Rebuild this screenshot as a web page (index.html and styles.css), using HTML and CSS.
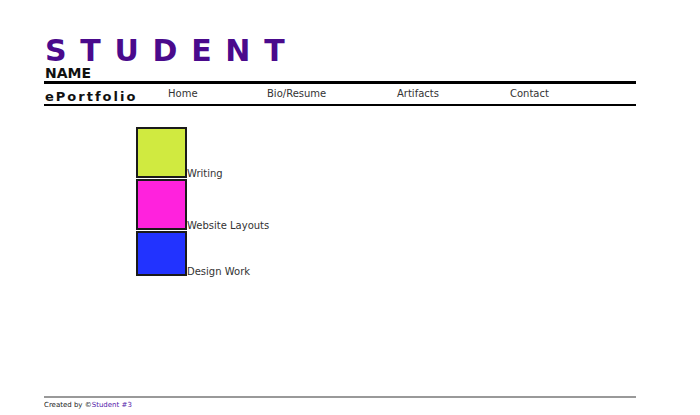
FILE: index.html
```html
<!DOCTYPE html>
<html>
<head>
<meta charset="utf-8">
<link rel="stylesheet" href="styles.css">
</head>
<body>
<div class="page">
  <header class="header">
    <div class="title">STUDENT</div>
    <div class="subtitle">NAME</div>
    <nav class="navbar">
      <span class="brand">ePortfolio</span>
      <a class="nav-link home">Home</a>
      <a class="nav-link bio">Bio/Resume</a>
      <a class="nav-link artifacts">Artifacts</a>
      <a class="nav-link contact">Contact</a>
    </nav>
  </header>
  <main class="content">
    <div class="item"><span class="swatch lime"></span><span class="label">Writing</span></div>
    <div class="item"><span class="swatch magenta"></span><span class="label">Website Layouts</span></div>
    <div class="item"><span class="swatch blue"></span><span class="label">Design Work</span></div>
  </main>
  <footer class="footer">
    Created by ©<span class="author">Student #3</span>
  </footer>
</div>
</body>
</html>
```
FILE: styles.css
```css
html, body {
  margin: 0;
  padding: 0;
  background: #fff;
}
body {
  font-family: "DejaVu Sans", Verdana, sans-serif;
  color: #222;
}
.page {
  width: 592px;
  margin-left: 44px;
  height: 415px;
  display: flex;
  flex-direction: column;
}
.header {
  padding-top: 35px;
}
.title {
  font-size: 30px;
  font-weight: bold;
  color: #4a0a8c;
  letter-spacing: 13.7px;
  line-height: 31px;
  padding-left: 1px;
}
.subtitle {
  font-size: 14px;
  font-weight: bold;
  color: #111;
  line-height: 14px;
  padding-left: 1px;
}
.navbar {
  margin-top: 1px;
  border-top: 3px solid #000;
  border-bottom: 2px solid #000;
  height: 20px;
  display: flex;
  align-items: flex-start;
}
.brand {
  font-size: 13px;
  font-weight: bold;
  letter-spacing: 2px;
  color: #111;
  line-height: 13px;
  padding-left: 1px;
  margin-top: 6px;
  width: 123px;
}
.nav-link {
  font-size: 10px;
  color: #333;
  line-height: 12px;
  margin-top: 4px;
}
.home { width: 99px; }
.bio { width: 130px; }
.artifacts { width: 113px; }
.content {
  padding-top: 21px;
  padding-left: 92px;
  flex: 1;
  display: flex;
  flex-direction: column;
  gap: 1px;
}
.item {
  display: flex;
  align-items: flex-end;
}
.swatch {
  display: block;
  width: 47px;
  height: 47px;
  border: 2px solid #1a1a1a;
}
.lime { background: #d0ea40; }
.magenta { background: #ff22dd; }
.blue { background: #2233ff; height: 41px; }
.label {
  font-size: 10px;
  color: #333;
  line-height: 10px;
  margin-bottom: -1px;
}
.footer {
  border-top: 2px solid #999;
  font-size: 7px;
  color: #222;
  padding-top: 3px;
  line-height: 8px;
  height: 8px;
  margin-bottom: 6px;
}
.author { color: #5522aa; }
```
